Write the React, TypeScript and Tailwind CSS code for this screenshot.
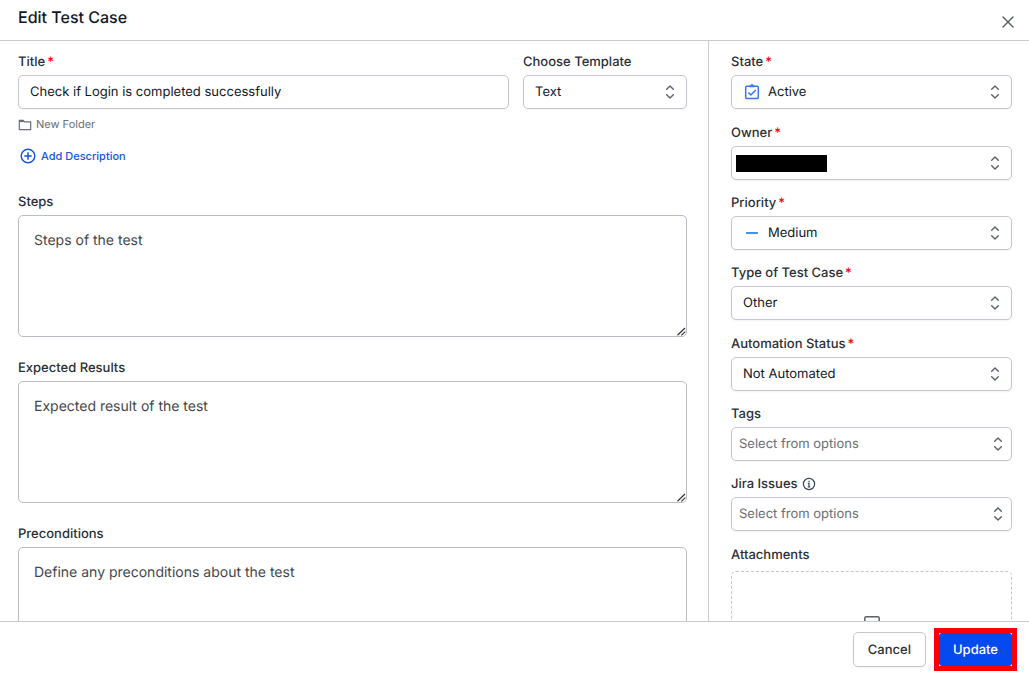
import type { ReactNode } from 'react';

const fieldBox =
  'h-[34px] w-full appearance-none rounded-[5px] border border-[#c3c6cc] bg-white text-[13px] leading-5 text-gray-900 shadow-xs outline-none [text-rendering:inherit] focus:border-blue-600';

function Label({ htmlFor, required, children }: { htmlFor: string; required?: boolean; children: ReactNode }) {
  return (
    <label htmlFor={htmlFor} className="flex h-5 items-center text-[13px] leading-5 font-medium text-[#2b2f36]">
      {children}
      {required && <span className="ml-0.5 text-red-600">*</span>}
    </label>
  );
}

function UpDown() {
  return (
    <svg viewBox="0 0 10 16" className="h-4 w-2.5" fill="none" stroke="#5b616b" strokeWidth="1.4" strokeLinecap="round" strokeLinejoin="round">
      <path d="M1.7 5.2 5 1.9l3.3 3.3M1.7 10.8 5 14.1l3.3-3.3" />
    </svg>
  );
}

type SelectProps = {
  id: string;
  label: string;
  value: string;
  required?: boolean;
  muted?: boolean;
  icon?: ReactNode;
  info?: ReactNode;
  redacted?: boolean;
};

function SelectField({ id, label, value, required, muted, icon, info, redacted }: SelectProps) {
  const padding = icon ? 'pl-9 pr-8' : muted ? 'pl-[7px] pr-8' : 'pl-[11px] pr-8';
  const color = muted ? 'text-[#6b6e74]!' : '';
  return (
    <div className="flex flex-col gap-[3px]">
      <Label htmlFor={id} required={required}>
        {label}
        {info}
      </Label>
      <div className="relative">
        <select id={id} defaultValue={value} className={`${fieldBox} ${padding} ${color}`}>
          <option value={value}>{value}</option>
        </select>
        {icon && <span className="pointer-events-none absolute inset-y-0 left-3 flex w-[18px] items-center justify-center">{icon}</span>}
        {redacted && (
          <span className="pointer-events-none absolute inset-y-0 left-[5px] flex items-center">
            <span className="h-[17px] w-[91px] bg-black" />
          </span>
        )}
        <span className={`pointer-events-none absolute inset-y-0 flex items-center ${muted ? 'right-[9px]' : 'right-3'}`}>
          <UpDown />
        </span>
      </div>
    </div>
  );
}

function AreaField({ id, label, value }: { id: string; label: string; value: string }) {
  return (
    <div className="flex flex-col gap-[3px]">
      <Label htmlFor={id}>{label}</Label>
      <div className="relative flex">
        <textarea
          id={id}
          defaultValue={value}
          className="h-[122px] w-full resize-none rounded-[5px] border border-[#b9bcc2] bg-white p-[15px] text-sm leading-5 text-[#44474c] outline-none [text-rendering:inherit] focus:border-blue-600"
        />
        <svg viewBox="0 0 9 9" className="pointer-events-none absolute right-px bottom-px size-[9px]" stroke="#333" strokeWidth="1.2">
          <path d="M0.5 8.2 8 1M4.3 8.4 8.3 4.6" />
        </svg>
      </div>
    </div>
  );
}

function ActiveIcon() {
  return (
    <svg viewBox="0 0 16 16" className="size-4" fill="none" stroke="#3478e5" strokeWidth="1.5" strokeLinejoin="round">
      <rect x="1.7" y="2.2" width="12.6" height="12.4" rx="1" />
      <path d="M5.3 2.3h5.4M6.8 1.1h2.4" strokeWidth="1.8" />
      <path d="m4.4 8.6 2.5 2.4 4.9-5" />
    </svg>
  );
}

function MediumIcon() {
  return (
    <svg viewBox="0 0 12 2" className="h-0.5 w-3">
      <rect width="12" height="2" rx="0.5" fill="#4a90e2" />
    </svg>
  );
}

function InfoIcon() {
  return (
    <svg viewBox="0 0 14 14" className="ml-1 size-3.5" fill="none" stroke="#374151" strokeWidth="1.2">
      <circle cx="7" cy="7" r="5.6" />
      <path d="M5.8 6.3H7v3.6M5.8 10h2.5M7 3.8v1.2" />
    </svg>
  );
}

export default function App() {
  return (
    <div className="flex h-screen flex-col overflow-hidden bg-white font-[Inter,sans-serif] text-gray-900 [text-rendering:geometricPrecision]">
      <header className="flex h-[41px] shrink-0 justify-between border-b border-[#c9cbcf] pr-[13px] pl-[18px]">
        <h1 className="pt-[5px] text-base leading-6 font-medium">Edit Test Case</h1>
        <button type="button" aria-label="Close" className="mt-3.5 size-4">
          <svg viewBox="0 0 16 16" className="size-4" stroke="#555b65" strokeWidth="1.4" strokeLinecap="round">
            <path d="m3 3 10 10M13 3 3 13" />
          </svg>
        </button>
      </header>

      <main className="flex min-h-0 flex-1">
        <section className="min-w-0 flex-1 overflow-hidden pt-[11px] pr-[21px] pl-[18px]">
          <div className="flex gap-3.5">
            <div className="flex min-w-0 flex-1 flex-col gap-[3px]">
              <Label htmlFor="title" required>Title</Label>
              <input id="title" type="text" defaultValue="Check if Login is completed successfully" className={`${fieldBox} px-[11px]`} />
            </div>
            <div className="w-[164px] shrink-0">
              <SelectField id="template" label="Choose Template" value="Text" />
            </div>
          </div>

          <div className="mt-[5px] flex h-5 items-center gap-1 text-[11px] leading-5 text-[#6b6e74]">
            <svg viewBox="0 0 14 12" className="mt-0.5 h-3 w-3.5" fill="none" stroke="#6b6e74" strokeWidth="1.2" strokeLinejoin="round">
              <path d="M1.3 10.6V1.4h4l1.2 1.4h6.2v7.8z" />
              <path d="M1.3 2.5h4.5" />
            </svg>
            New Folder
          </div>

          <button type="button" className="mt-3 ml-0.5 flex h-5 items-center gap-[5px] text-[11px] leading-5 font-medium text-[#1557d6]">
            <svg viewBox="0 0 16 16" className="size-4" fill="none" stroke="#1557d6" strokeWidth="1.5" strokeLinecap="round">
              <circle cx="8" cy="8" r="6.8" />
              <path d="M8 4.8v6.4M4.8 8h6.4" />
            </svg>
            Add Description
          </button>

          <div className="mt-[26px] flex flex-col gap-[21px]">
            <AreaField id="steps" label="Steps" value="Steps of the test" />
            <AreaField id="expected" label="Expected Results" value="Expected result of the test" />
            <AreaField id="preconditions" label="Preconditions" value="Define any preconditions about the test" />
          </div>
        </section>

        <aside className="w-[321px] shrink-0 overflow-hidden border-l border-[#c9cbcf] pt-[11px] pr-[17px] pl-[22px]">
          <div className="flex flex-col gap-3.5">
            <SelectField id="state" label="State" value="Active" required icon={<ActiveIcon />} />
            <div className="flex flex-col gap-[13px]">
              <SelectField id="owner" label="Owner" value="" required redacted />
              <SelectField id="priority" label="Priority" value="Medium" required icon={<MediumIcon />} />
              <SelectField id="type" label="Type of Test Case" value="Other" required />
            </div>
            <div className="flex flex-col gap-[13px]">
              <SelectField id="automation" label="Automation Status" value="Not Automated" required />
              <SelectField id="tags" label="Tags" value="Select from options" muted />
              <SelectField id="jira" label="Jira Issues" value="Select from options" muted info={<InfoIcon />} />
            </div>
            <div className="flex flex-col gap-1.5">
              <Label htmlFor="attachments">Attachments</Label>
              <label className="flex h-32 cursor-pointer justify-center rounded-[5px] border border-dashed border-[#c3c6cc] pt-11">
                <input id="attachments" type="file" className="sr-only" />
                <svg viewBox="0 0 16 20" className="h-5 w-4" fill="none" stroke="#5b616b" strokeWidth="1.5">
                  <rect x="0.8" y="0.8" width="14.4" height="18.4" rx="1.5" />
                </svg>
              </label>
            </div>
          </div>
        </aside>
      </main>

      <footer className="flex h-14 shrink-0 items-center justify-end gap-2 border-t border-[#c9cbcf] pr-3">
        <button type="button" className="h-[35px] rounded-[5px] border border-[#c3c6cc] bg-white px-3.5 text-[13px] leading-5 font-medium text-[#2b2f36] shadow-xs [text-rendering:inherit]">
          Cancel
        </button>
        <div className="border-[5px] border-[#fb0007] bg-white">
          <button type="button" className="block h-[33px] rounded-[3px] bg-[#0549f0] px-3.5 text-[13px] leading-5 font-medium text-white [text-rendering:inherit]">
            Update
          </button>
        </div>
      </footer>
    </div>
  );
}
